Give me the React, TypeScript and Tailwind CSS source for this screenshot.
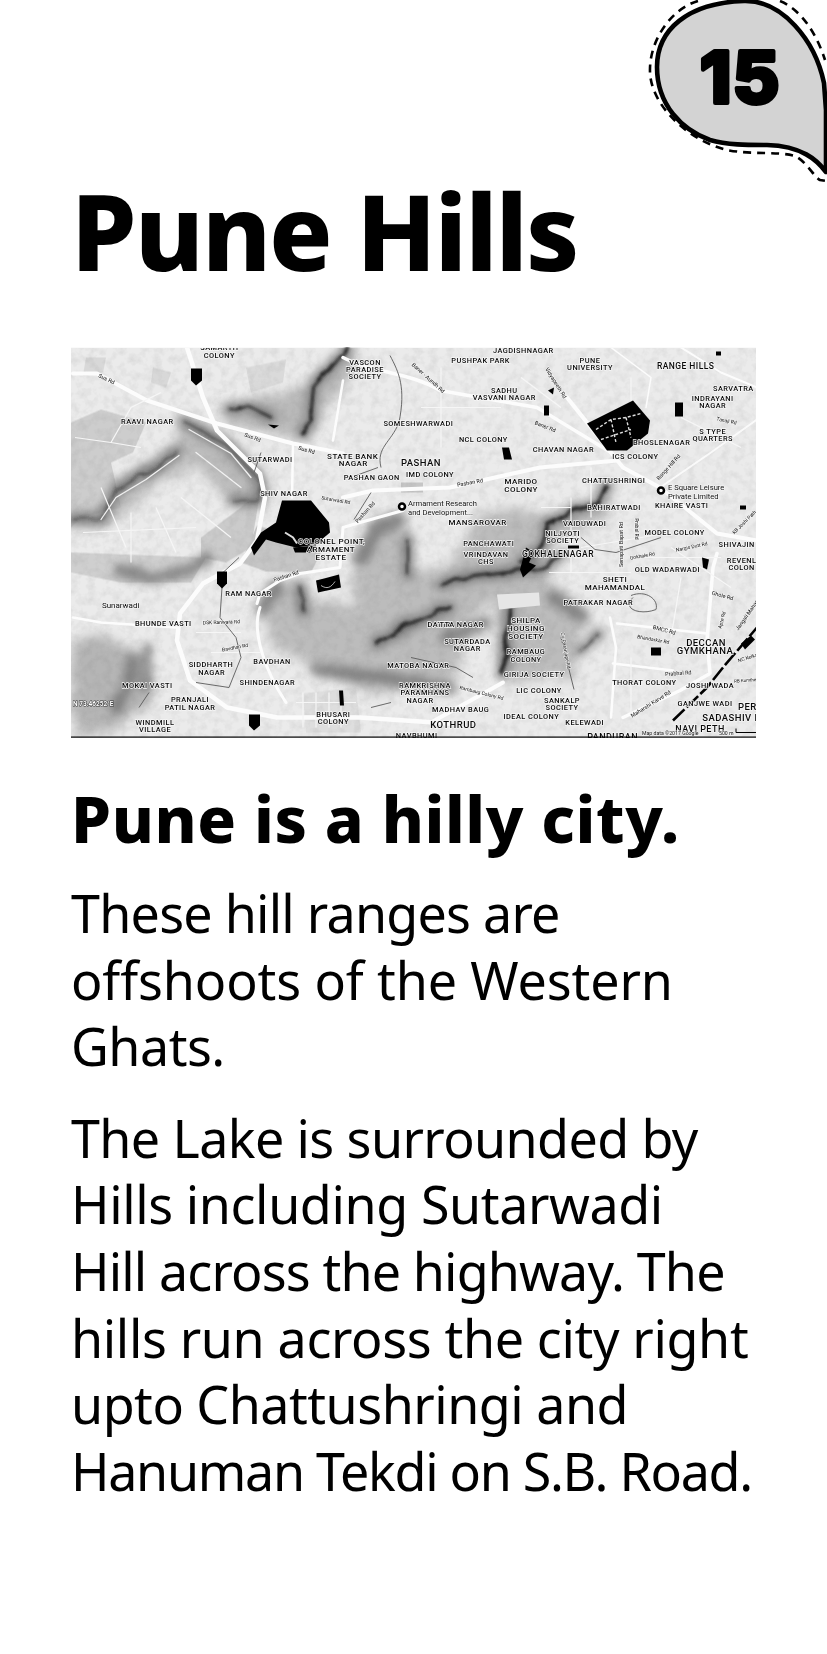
import React from "react";

type Lb = [string, number, number, number?, number?];
const a = (x: number, y: number) => [x / 3 - 11, y / 3 - 7];
const b = (x: number, y: number) => [x / 3 + 369, y / 3 - 7];

const leftLabels: Lb[] = [
  ["SAMARTH", 478, 22], ["COLONY", 478, 44], ["VASCON", 915, 65], ["PARADISE", 915, 87], ["SOCIETY", 915, 109],
  ["RAAVI NAGAR", 262, 242], ["SOMESHWARWADI", 1075, 250], ["SUTARWADI", 630, 358], ["STATE BANK", 878, 347, 8], ["NAGAR", 880, 370, 8],
  ["PASHAN", 1083, 365, 9.5], ["PASHAN GAON", 935, 412], ["IMD COLONY", 1110, 402], ["SHIV NAGAR", 672, 460],
  ["COLONEL POINT,", 815, 604, 8], ["ARMAMENT", 813, 628, 8], ["ESTATE", 813, 652, 8], ["RAM NAGAR", 566, 759], ["Sunarwadi", 182, 795, 8],
  ["BHUNDE VASTI", 310, 849], ["DATTA", 1140, 851], ["SIDDHARTH", 453, 973], ["NAGAR", 455, 996], ["BAVDHAN", 636, 962],
  ["SHINDENAGAR", 622, 1026], ["MATOBA NAGAR", 1075, 975], ["MOKAI VASTI", 262, 1035], ["RAMKRISHNA", 1095, 1034], ["PARAMHANS", 1095, 1057],
  ["NAGAR", 1080, 1080], ["PRANJALI", 390, 1078], ["PATIL NAGAR", 390, 1100], ["BHUSARI", 820, 1121], ["COLONY", 820, 1143],
  ["WINDMILL", 285, 1146], ["VILLAGE", 285, 1168], ["NAVBHUMI", 1070, 1184],
];
const leftRoads: Lb[] = [
  ["Sus Rd", 140, 115, 5.5, 25], ["Sus Rd", 578, 290, 5.5, 20], ["Sus Rd", 740, 328, 5.5, 15], ["Baner - Aundh Rd", 1105, 112, 5.5, 42], ["Sutarwadi Rd", 828, 478, 5, 10],
  ["Pashan Rd", 915, 515, 5.5, -48], ["Pashan Rd", 678, 706, 5.5, -18], ["DSK Ranwara Rd", 484, 844, 5, -2], ["Bavdhan Rd", 525, 920, 5, -10],
];
const rightLabels: Lb[] = [
  ["JAGDISHNAGAR", 250, 31], ["PUSHPAK PARK", 122, 59], ["PUNE", 450, 59], ["UNIVERSITY", 450, 81], ["RANGE HILLS", 737, 75, 8.5],
  ["SARVATRA", 880, 143], ["SADHU", 193, 149], ["VASVANI NAGAR", 193, 171], ["INDRAYANI", 818, 173], ["NAGAR", 818, 195],
  ["S TYPE", 818, 272], ["QUARTERS", 818, 294], ["NCL COLONY", 130, 298], ["BHOSLENAGAR", 665, 305], ["CHAVAN NAGAR", 370, 326],
  ["ICS COLONY", 586, 347], ["CHATTUSHRINGI", 521, 419], ["MARIDO", 243, 423, 8], ["COLONY", 243, 447, 8], ["KHAIRE VASTI", 725, 494],
  ["BAHIRATWADI", 522, 502], ["VAIDUWADI", 434, 550], ["MANSAROVAR", 113, 546, 8], ["MODEL COLONY", 704, 575], ["NILJYOTI", 368, 578],
  ["SOCIETY", 368, 600], ["PANCHAWATI", 146, 609], ["SHIVAJIN", 890, 613], ["VRINDAVAN", 138, 641], ["CHS", 138, 664],
  ["GOKHALENAGAR", 354, 641, 8.5], ["REVENL", 905, 660], ["COLON", 905, 682], ["OLD WADARWADI", 682, 688], ["SHETI", 525, 716, 8],
  ["MAHAMANDAL", 525, 740, 8], ["PATRAKAR NAGAR", 475, 787], ["TTA NAGAR", 65, 851], ["SHILPA", 258, 839, 8], ["HOUSING", 258, 863, 8],
  ["SOCIETY", 258, 887, 8], ["SUTARDADA", 82, 903], ["NAGAR", 82, 925], ["DECCAN", 798, 905, 9.5], ["GYMKHANA", 795, 931, 9.5],
  ["RAMBAUG", 258, 934], ["COLONY", 258, 957], ["GIRIJA SOCIETY", 282, 1001], ["THORAT COLONY", 613, 1026], ["JOSHI WADA", 810, 1035],
  ["LIC COLONY", 297, 1051], ["SANKALP", 366, 1079], ["SOCIETY", 366, 1101], ["MADHAV BAUG", 62, 1108], ["GANJWE WADI", 795, 1088],
  ["PER", 922, 1097, 9.5], ["SADASHIV P", 875, 1130, 9.5], ["IDEAL COLONY", 274, 1127], ["KELEWADI", 434, 1146], ["KOTHRUD", 40, 1152, 9.5], ["NAVI PETH", 780, 1164, 9], ["PANDURAN", 518, 1190, 9],
];
const rightRoads: Lb[] = [
  ["Vidyapeeth Rd", 348, 127, 5.5, 58], ["Baner Rd", 316, 258, 5.5, 22], ["Tanaji Rd", 860, 240, 5, 12], ["Range Hill Rd", 685, 380, 5.5, -48], ["Pashan Rd", 90, 426, 5.5, -10],
  ["Senapati Bapat Rd", 543, 612, 5.5, -90], ["Prabal Rd", 590, 565, 5, 90], ["Gokhale Rd", 607, 645, 5, -10], ["Nargis Dutt Rd", 755, 618, 5, -12], ["KB Joshi Path", 912, 545, 5, -45],
  ["Ghole Rd", 848, 765, 5.5, 15], ["Apte Rd", 845, 838, 5, -75], ["BMCC Rd", 673, 868, 5.5, 15], ["Bhandarkar Rd", 640, 896, 5, 10], ["Jangali Maharaj Rd", 930, 810, 5.5, -55],
  ["Cu Paranjape Rd", 378, 930, 5, 80], ["NC Kelkar", 925, 950, 5, -18], ["Prabhal Rd", 715, 998, 5.5, -4], ["Rambaug Colony Rd", 125, 1056, 5, 14], ["RB Kumthekar", 925, 1019, 4.5, -4],
  ["Maharshi Karve Rd", 632, 1090, 5.5, -32],
];

function Labels({ items, at }: { items: Lb[]; at: (x: number, y: number) => number[] }) {
  return (
    <>
      {items.map(([t, x, y, s = 7.4, r = 0], i) => {
        const [px, py] = at(x, y);
        const road = t !== t.toUpperCase();
        return (
          <text
            key={i}
            x={px}
            y={py}
            textAnchor="middle"
            dominantBaseline="central"
            fontSize={s}
            fontWeight={road ? 400 : 500}
            letterSpacing={road ? 0 : 0.45}
            fill="#0a0a0a"
            stroke="#f6f6f6"
            strokeWidth={road ? 1 : 1.3}
            paintOrder="stroke"
            transform={r ? `rotate(${r} ${px} ${py})` : undefined}
          >
            {t}
          </text>
        );
      })}
    </>
  );
}

const darkRidges = [
  "M276 0 L258 22 L243 40 L240 72 L230 84",
  "M200 70 L176 58 L160 62",
  "M2 172 L32 170 L42 145 L72 127 L106 104",
  "M112 73 L156 98 L189 133 L186 153 L162 153",
  "M306 296 L339 276 L379 260",
  "M369 236 L396 230 L452 223 L472 220 L492 210",
  "M476 180 L472 193 L466 203 L452 216",
  "M476 176 L502 163 L529 156 L536 140",
  "M439 260 L436 295 L432 326",
  "M336 193 L336 226",
  "M229 240 L232 263",
  "M526 286 L509 303",
  "M482 250 L512 270",
  "M375 290 L415 275",
  "M246 322 L310 330 L379 340",
  "M49 222 L82 231 L122 222 L136 212",
  "M289 212 L305 180 L330 172",
  "M206 238 L190 262",
  "M45 360 L60 330 L62 310",
  "M75 300 V340",
];

function PuneMap() {
  return (
    <svg viewBox="0 0 685 390" className="block h-[391px] w-[685px]" fontFamily="Roboto, 'Liberation Sans', sans-serif">
      <defs>
        <filter id="soft" x="-10%" y="-10%" width="120%" height="120%">
          <feTurbulence type="fractalNoise" baseFrequency="0.03" numOctaves="3" seed="4" result="n" />
          <feDisplacementMap in="SourceGraphic" in2="n" scale="18" />
          <feGaussianBlur stdDeviation="6" />
        </filter>
        <filter id="halo" x="-10%" y="-10%" width="120%" height="120%">
          <feTurbulence type="fractalNoise" baseFrequency="0.05" numOctaves="2" seed="9" result="n" />
          <feDisplacementMap in="SourceGraphic" in2="n" scale="8" />
          <feGaussianBlur stdDeviation="4.5" />
        </filter>
        <filter id="ridge" x="-10%" y="-10%" width="120%" height="120%">
          <feTurbulence type="fractalNoise" baseFrequency="0.05" numOctaves="2" seed="9" result="n" />
          <feDisplacementMap in="SourceGraphic" in2="n" scale="8" />
          <feGaussianBlur stdDeviation="1.8" />
        </filter>
        <filter id="grain" x="0" y="0" width="100%" height="100%">
          <feTurbulence type="fractalNoise" baseFrequency="0.12" numOctaves="3" seed="2" />
          <feColorMatrix values="0 0 0 0 0.15  0 0 0 0 0.15  0 0 0 0 0.15  1.1 0 0 0 -0.45" />
        </filter>
        <filter id="tiny"><feGaussianBlur stdDeviation="0.7" /></filter>
        <clipPath id="clip"><rect width="685" height="390" /></clipPath>
      </defs>
      <g clipPath="url(#clip)">
        <rect width="685" height="390" fill="#ebebeb" />
        {/* parks and fields */}
        <g fill="#c6c6c6" filter="url(#tiny)">
          <path d="M0 75 L30 62 L75 75 L62 105 L40 115 L50 160 L10 170 L0 180Z" opacity=".8" />
          <path d="M15 10 L35 10 L32 25 L12 28Z" opacity=".5" />
          <path d="M82 20 L100 25 L95 40 L80 35Z" opacity=".5" />
          <path d="M175 20 L215 12 L212 35 L180 45Z" opacity=".45" />
          <path d="M130 190 L170 160 L190 140 L180 200 L155 215 L130 210Z" opacity=".85" />
          <path d="M186 178 L228 190 L250 205 L240 225 L195 224 L170 215Z" />
          <path d="M0 205 L135 210 L120 235 L50 235 L0 225Z" opacity=".75" />
          <path d="M232 346 L285 340 L290 385 L235 385Z" opacity=".35" />
          <path d="M330 135 H352 V145 H330Z" />
        </g>
        {/* relief: broad slopes */}
        <g filter="url(#soft)">
          <path fill="#bcbcbc" d="M189 260 L206 236 L229 233 L242 260 L282 256 L282 226 L286 206 L306 176 L329 170 L342 190 L336 226 L379 220 L409 160 L469 166 L529 153 L536 140 L540 170 L490 190 L469 226 L519 266 L502 333 L432 330 L426 256 L400 270 L379 340 L300 345 L246 322 L200 300Z" />
          <path fill="#a8a8a8" d="M0 295 L30 290 L60 300 L78 350 L50 385 L0 385Z" opacity=".8" />
          <path fill="#b0b0b0" d="M150 60 L200 52 L240 40 L270 0 L285 0 L262 60 L240 90 L200 85 L160 80Z" opacity=".85" />
          <path fill="#b0b0b0" d="M0 165 L35 160 L50 135 L105 95 L125 118 L80 140 L50 175 L0 185Z" opacity=".7" />
          <path fill="#b0b0b0" d="M108 70 L155 90 L195 130 L190 158 L160 156 L125 118 L105 95Z" opacity=".8" />
        </g>
        <g fill="none" stroke="#666" strokeWidth="13" strokeLinecap="round" strokeLinejoin="round" filter="url(#halo)" opacity=".65">
          {darkRidges.map((d) => <path key={d} d={d} />)}
        </g>
        <g fill="none" stroke="#242424" strokeLinecap="round" strokeLinejoin="round" filter="url(#ridge)">
          <path d={darkRidges[0]} strokeWidth="4" />
          <path d={darkRidges[1]} strokeWidth="2.5" />
          <path d={darkRidges[2]} strokeWidth="1.6" opacity=".7" />
          <path d={darkRidges[3]} strokeWidth="1.6" opacity=".7" />
          <path d={darkRidges[4]} strokeWidth="3.5" />
          <path d={darkRidges[5]} strokeWidth="3" />
          <path d={darkRidges[6]} strokeWidth="4" />
          <path d={darkRidges[7]} strokeWidth="4" />
          <path d={darkRidges[8]} strokeWidth="4" />
          <path d={darkRidges[9]} strokeWidth="2.5" opacity=".8" />
          <path d={darkRidges[10]} strokeWidth="2.5" opacity=".7" />
          <path d={darkRidges[11]} strokeWidth="2" opacity=".7" />
        </g>
        <g fill="none" stroke="#f3f3f3" strokeWidth="1.3" strokeLinecap="round" filter="url(#tiny)">
          <path d="M30 172 L45 150 L75 132 L108 108 M118 82 L160 106 L180 130 M125 105 L170 140" />
        </g>
        <rect width="685" height="390" filter="url(#grain)" opacity=".22" />
        {/* roads */}
        <g fill="none" stroke="#fcfcfc" strokeLinecap="round" strokeLinejoin="round">
          <path d="M2 26 L26 26 L76 53 L146 76 L222 96 L272 106" strokeWidth="4" />
          <path d="M116 0 L132 50 L146 83 L189 126 L194 150 L186 193 L169 216 L132 236 L109 266 L106 293 L119 333 L156 360 L206 370 L289 370 L379 376" strokeWidth="4.5" />
          <path d="M272 33 L262 93 M222 96 L221 150" strokeWidth="2.5" />
          <path d="M272 10 C300 25 340 25 369 43 L466 60 L540 105" strokeWidth="3.5" />
          <path d="M496 50 L552 120 L589 140 L646 186 L686 193" strokeWidth="4" />
          <path d="M272 150 L302 143 L379 140 L469 120 L546 113" strokeWidth="4" />
          <path d="M186 256 L189 246 L209 233 L229 226 L269 220 L272 180 L289 175 L332 163" strokeWidth="3" />
          <path d="M552 370 L609 343 L639 326 L636 293 L642 220 L646 206" strokeWidth="3.5" />
          <path d="M546 276 L636 286 M542 316 L602 323 M539 270 L545 300 L540 370" strokeWidth="2.5" />
          <path d="M2 270 L30 275 L105 280" strokeWidth="2.5" />
          <path d="M189 260 C180 285 195 325 215 355" strokeWidth="3" />
          <path d="M360 375 L405 350 L432 335" strokeWidth="4" />
          <path d="M589 140 L640 105 L686 72" strokeWidth="2" opacity=".9" />
          <path d="M610 0 L650 25 L686 40" strokeWidth="2" />
          <path d="M540 0 L580 30 L575 60" strokeWidth="1.5" />
        </g>
        <g fill="none" stroke="#f6f6f6" strokeWidth="1.2">
          <path d="M4 90 L40 95 L70 100 M40 95 L60 60 L90 45 M60 165 V215 M12 185 L125 180 M85 160 L105 205 M30 140 L55 200 M110 150 L160 190" />
          <path d="M470 160 H500 M500 150 V225 M478 225 H560 M520 120 V170 M570 210 H650 M610 230 L600 290 M560 310 V370" />
          <path d="M125 285 H170 M140 305 H190 M350 60 H430 M370 20 V100 M450 30 L490 60 M560 30 V90 M610 70 L670 100 M600 200 L660 240 M510 200 L600 185" />
          <path d="M232 345 V380 M245 345 V380 M258 345 V380 M270 345 V380 M225 355 H285 M225 368 H285" />
        </g>
        <path d="M426 247 L468 245 L469 258 L428 262Z" fill="#e6e6e6" />
        {/* streams */}
        <g fill="none" stroke="#5a5a5a" strokeWidth="0.9">
          <path d="M319 8 C328 25 335 40 328 75 C320 95 305 100 310 120" />
          <path d="M190 105 L183 125 M168 210 L152 225 L149 270 L165 290 L170 310 L158 340 L125 335" />
          <path d="M300 145 L283 172 M307 120 L285 128" />
          <path d="M560 248 C575 242 588 252 585 262 C570 268 550 262 562 250" />
          <path d="M510 190 L524 202 L545 205 C560 200 575 195 590 190" />
          <path d="M340 310 L385 320 L402 330 M300 360 L320 355" />
          <path d="M78 345 L68 360 M490 290 L503 342" />
        </g>
        {/* lakes and dark blocks */}
        <g fill="#000">
          <path d="M211 153 L240 153 L258 175 L259 185 L245 197 L225 200 L205 195 L195 192 L183 208 L180 200 L190 185 L205 175Z" />
          <path d="M222 200 L245 198 L243 205 L224 205Z" />
          <path d="M245 233 L268 227 L270 240 L247 245Z" />
          <path d="M120 21 H131 V33 L125 38 L120 33Z" />
          <path d="M146 224 H156 V236 L151 241 L146 236Z" />
          <path d="M178 367 H189 V378 L183 383 L178 378Z" />
          <path d="M268 343 L272 343 L273 358 L269 358Z" />
          <path d="M197 77 L208 78 L203 81Z" />
          <path d="M516 76 L562 53 L579 73 L577 86 L556 103 L536 103Z" />
          <rect x="604" y="55" width="8" height="14" />
          <path d="M473 58 L478 58 L478 68 L473 68Z" />
          <path d="M477 43 L483 40 L482 47Z" />
          <path d="M431 100 L438 100 L441 112 L433 112Z" />
          <rect x="580" y="300" width="10" height="8" />
          <path d="M455 200 L463 205 L458 215 L465 218 L452 230 L449 222Z" />
          <path d="M631 210 L638 212 L636 222 L632 220Z" />
          <path d="M670 296 L680 288 L684 292 L674 302Z" />
          <rect x="645" y="4" width="5" height="4" />
          <rect x="669" y="158" width="6" height="4" />
          <path d="M497 198 H508 V201 H497Z" />
        </g>
        <g fill="none" stroke="#ddd" strokeWidth="0.8">
          <path d="M250 238 C256 242 260 240 264 234" />
          <path d="M214 185 L222 190 L226 196" strokeWidth="2" />
          <path d="M525 82 L540 72 L555 70 L570 66 M540 72 L545 95 M555 70 L560 90 M530 92 L560 82" strokeDasharray="3 2" strokeWidth="1.4" />
        </g>
        <path d="M602 373 L636 340 L652 320 L686 280" fill="none" stroke="#000" strokeWidth="2.6" strokeDasharray="16 3" />
        <g fill="#fff" stroke="#000" strokeWidth="2.5">
          <circle cx="331" cy="159" r="3" />
          <circle cx="590" cy="143" r="3" />
        </g>
        <Labels items={leftRoads} at={a} />
        <Labels items={rightRoads} at={b} />
        <Labels items={leftLabels} at={a} />
        <Labels items={rightLabels} at={b} />
        <g fontSize="7.6" fill="#111" stroke="#f6f6f6" strokeWidth="1.2" paintOrder="stroke">
          <text x="337" y="158">Armament Research</text>
          <text x="337" y="167">and Development...</text>
          <text x="597" y="142">E Square Leisure</text>
          <text x="597" y="151">Private Limited</text>
        </g>
        <text x="2" y="358" fontSize="6.5" fontWeight="700" fill="#fff" stroke="#333" strokeWidth="1" paintOrder="stroke">N 73.46252°E</text>
        <g fill="#111" stroke="#f6f6f6" strokeWidth="0.8" paintOrder="stroke">
          <text x="571" y="387" fontSize="5.2">Map data ©2017 Google</text>
          <text x="648" y="387" fontSize="5.2">500 m</text>
        </g>
        <path d="M665 381 V385 H685" fill="none" stroke="#000" />
        <rect y="389" width="685" height="1.2" fill="#000" />
      </g>
    </svg>
  );
}

function Badge() {
  return (
    <svg viewBox="0 0 200 190" className="absolute right-0 top-0 h-[190px] w-[200px]">
      <path d="M30 67 C30 30 60 3 117 1 C155 0 188 40 197 83 L199 110 V172 C190 160 175 146 140 145 C120 145 100 145 83 140 C55 130 30 105 30 67Z" fill="#d3d3d3" stroke="#000" strokeWidth="4.6" strokeLinejoin="round" />
      <path d="M71 1 C45 8 22 40 23 72 C24 105 60 140 100 150 C125 155 150 151 168 156 C180 162 187 177 193 180 L200 181" fill="none" stroke="#000" strokeWidth="2.6" strokeDasharray="8 6" />
      <path d="M153 1 C175 10 190 35 198 60" fill="none" stroke="#000" strokeWidth="2.6" strokeDasharray="8 6" />
      <text x="113" y="103" textAnchor="middle" fontFamily="Inter, 'Noto Sans', sans-serif" fontWeight="800" fontSize="72" letterSpacing="1" stroke="#000" strokeWidth="4" strokeLinejoin="round" fill="#000">15</text>
    </svg>
  );
}

export default function App() {
  return (
    <div className="relative h-[1654px] w-[827px] overflow-hidden bg-white font-['Noto_Sans',sans-serif] text-black">
      <Badge />
      <div className="flex flex-col pl-[71px] pt-[166px]">
        <h1 className="text-[105px] font-extrabold leading-[130px] tracking-[-2px]">Pune Hills</h1>
        <div className="mt-[51px]"><PuneMap /></div>
        <h2 className="mt-[36px] text-[64px] font-extrabold leading-[90px] tracking-[0.6px]">Pune is a hilly city.</h2>
        <p className="mt-[16px] text-[52px] leading-[66.6px]">
          <span className="block tracking-[-0.75px]">These hill ranges are</span>
          <span className="block tracking-[-0.1px]">offshoots of the Western</span>
          <span className="block tracking-[-0.5px]">Ghats.</span>
        </p>
        <p className="mt-[25px] text-[52px] leading-[66.6px]">
          <span className="block tracking-[-0.6px]">The Lake is surrounded by</span>
          <span className="block tracking-[-0.4px]">Hills including Sutarwadi</span>
          <span className="block tracking-[-0.85px]">Hill across the highway. The</span>
          <span className="block tracking-[-0.35px]">hills run across the city right</span>
          <span className="block tracking-[-0.5px]">upto Chattushringi and</span>
          <span className="block tracking-[-1.3px]">Hanuman Tekdi on S.B. Road.</span>
        </p>
      </div>
    </div>
  );
}
